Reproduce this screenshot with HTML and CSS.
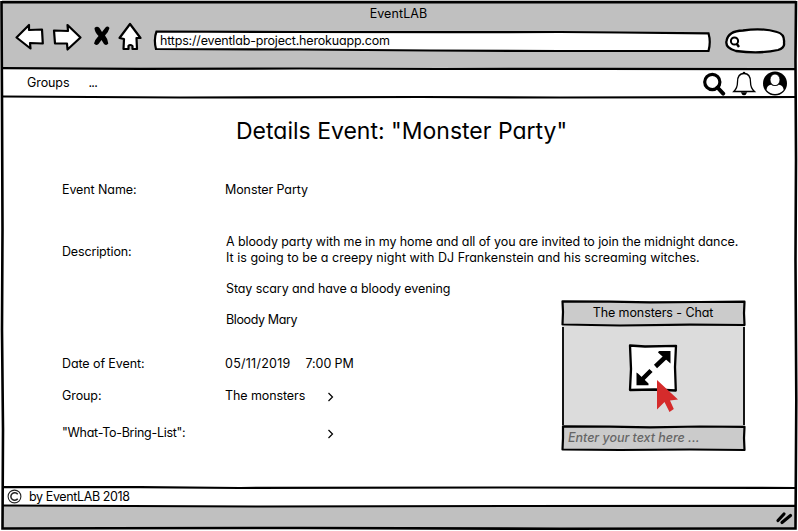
FILE: index.html
```html
<!DOCTYPE html>
<html lang="en">
<head>
<meta charset="utf-8">
<title>EventLAB</title>
<link rel="stylesheet" href="styles.css">
</head>
<body>
<div class="window">
  <header class="browser">
    <div class="browser-title"><span class="t-app">EventLAB</span></div>
    <div class="toolbar">
      <svg class="nav-icons" width="132" height="34" viewBox="12 20 132 34">
        <g fill="#fff" stroke="#000" stroke-width="2.2" stroke-linejoin="round">
          <path d="M16.500 37.500L29 25V30L42 29.500L42.800 43.500L30 43L30.500 48.500Z"/>
          <path d="M54 30.500L68 31L67.500 25L80.500 37.500L67.500 49.500L67 43.500L55 43.500Z"/>
          <path d="M130 24L140.500 38H136.500L137 49H132.500V46Q130 44 128.500 46V49H123.500L124 39L119.500 38Z"/>
        </g>
        <path d="M94.500 28Q97 25.500 99.500 28L102 32L105.500 27.500Q107.500 25.500 109.500 28Q108.500 32 105 35.500Q108 39 108.300 43.500Q106.500 46 104 44L101.500 40L98.500 44Q96 46 94 43.500Q95 39.500 98.500 36Q94.500 32 94.500 28Z"/>
      </svg>
      <div class="address">
        <svg class="sketch" width="560" height="22" viewBox="152 30 560 22"><path d="M156.500 31.500L300 32L450 32.200L560 32L620 32.500L708.500 33.300Q711 42 708.500 51L560 51L430 50.500L300 49.500L156 49Q153.500 39 156.500 31.500Z" fill="#fff" stroke="#000" stroke-width="2.200"/></svg>
        <span class="t-url">https://eventlab-project.herokuapp.com</span>
      </div>
      <svg class="search-box" width="62" height="28" viewBox="724 27 62 28">
        <path d="M736 51Q725 48 726.500 41Q728 31 743 30.500Q762 27.500 777 32Q785 34 784 43Q785 48 778 50Q760 54 736 51Z" fill="#fff" stroke="#000" stroke-width="2.300"/>
        <circle cx="734.500" cy="41" r="3.600" fill="none" stroke="#000" stroke-width="2"/><path d="M736.500 43.500L739 47" stroke="#000" stroke-width="2.400"/>
      </svg>
    </div>
  </header>
  <nav class="menu">
    <span class="t-groups">Groups</span><span class="dots">...</span>
    <svg class="menu-icons" width="86" height="26" viewBox="702 70 86 26">
      <circle cx="712.300" cy="82" r="7.600" fill="none" stroke="#000" stroke-width="3.200"/>
      <path d="M717.500 87.500L723.200 93.600" stroke="#000" stroke-width="4" stroke-linecap="round"/>
      <path d="M744 73.500C738.500 73.500 737.500 78 737.500 82C737.500 87 736.500 89 733.800 91.500H754.500C751.500 89 750.500 87 750.500 82C750.500 78 749.500 73.500 744 73.500Z" fill="#fff" stroke="#000" stroke-width="1.300"/>
      <path d="M743 73.500Q744 71.500 745 73.500" fill="none" stroke="#000" stroke-width="1.400"/>
      <path d="M740.800 92.200H747.200Q746 95.200 744 95.200Q742 95.200 740.800 92.200Z"/>
      <circle cx="775" cy="83.500" r="12"/>
      <path d="M766.500 90Q767 85 771 84.700Q775 87.500 779 84.700Q783 85 783.700 90Q780 94 775 94Q770 94 766.500 90Z" fill="#fff"/>
      <ellipse cx="775" cy="79.800" rx="5" ry="5.800" fill="#fff" stroke="#000" stroke-width=".8"/>
    </svg>
  </nav>
  <main class="page">
    <h1>Details Event: "Monster Party"</h1>
    <div class="body">
      <dl class="details">
        <dt>Event Name:</dt><dd class="v-name">Monster Party</dd>
        <dt class="l-desc">Description:</dt>
        <dd class="desc"><p>A bloody party with me in my home and all of you are invited to join the midnight dance.</p><p class="loose">It is going to be a creepy night with DJ Frankenstein and his screaming witches.</p><br><p>Stay scary and have a bloody evening</p><br><p class="signature">Bloody Mary</p></dd>
        <dt>Date of Event:</dt><dd class="row"><span class="v-date">05/11/2019</span><span class="v-time">7:00 PM</span></dd>
        <dt>Group:</dt><dd class="row"><span class="v-group">The monsters</span><svg class="chev" width="8" height="10" viewBox="0 0 8 10"><path d="M1.500 1L5.500 5L1.500 9"/></svg></dd>
        <dt class="l-list">"What-To-Bring-List":</dt><dd class="row"><span class="v-group"></span><svg class="chev" width="8" height="10" viewBox="0 0 8 10"><path d="M1.500 1L5.500 5L1.500 9"/></svg></dd>
      </dl>
      <section class="chat">
        <svg class="sketch" width="186" height="154" viewBox="560 299 186 154">
          <path d="M562 301H745V325H562Z" fill="#cbcbcb"/><path d="M562 326H745V426H562Z" fill="#dcdcdc"/><path d="M562 426H745V450H562Z" fill="#cbcbcb"/>
          <g fill="none" stroke="#000" stroke-width="2.200" stroke-linejoin="round"><path d="M562.500 301.300L610 301.600L650 302.300L700 302L744.500 301.700L744 313L744.500 325L690 324.700L620 325.500L562.500 324.500L563 312Z"/><path d="M563 327V425M744 327V425" stroke-width="1.800"/><path d="M563 426.300L610 426.600L650 427.300L700 426.500L744.500 426.800L744 438L744.500 450L690 449.500L620 450L562.500 449.500L563 438Z"/></g>
        </svg>
        <header class="chat-head"><span class="t-chat">The monsters - Chat</span></header>
        <div class="chat-body">
          <svg width="54" height="70" viewBox="627 343 54 70">
            <path d="M630 346.500L645 347.500L676 346.800L675 368L675.800 391.500L655 390.500L630 391L631 370Z" fill="#fff" stroke="#000" stroke-width="2.300" stroke-linejoin="round"/>
            <path d="M655.500 367.500L665.500 358M651 371.500L642.500 380" stroke="#000" stroke-width="4.500"/>
            <path d="M670.500 352V364.500L658 353.500L659 352ZM636.500 386.200V373.500L638 374.500L648.500 384.500V386.200Z"/>
            <path d="M657 381V410.500L664.500 403L669.500 413L673.800 410L670 401.500L678 400.500Z" fill="#d52b2b"/>
          </svg>
        </div>
        <footer class="chat-input"><span class="t-input">Enter your text here ...</span></footer>
      </section>
    </div>
  </main>
  <footer class="footer"><svg width="15" height="15" viewBox="0 0 15 15" fill="none" stroke="#222"><circle cx="7.500" cy="7.500" r="6.400" stroke-width="1.100"/><path d="M10.700 5.200A3.800 3.800 0 1 0 10.700 9.800" stroke-width="1.500"/></svg><span class="t-by">by EventLAB 2018</span></footer>
  <div class="status"><svg width="19" height="14" viewBox="774 511 19 14"><path d="M778 520.500L784 514M782 522.500L790.500 515.500" stroke="#000" stroke-width="3.200" stroke-linecap="round"/></svg></div>
  <svg class="frame" width="798" height="531" viewBox="0 0 798 531">
    <g fill="none" stroke="#000" stroke-width="2.200">
      <path d="M1.500 2.200H796L795.500 60L796 160L795.500 260L796.300 400L795.500 528.500L560 528.800L300 528L110 528.200L2.500 528.500L3 430L2 330L2.500 230L2 100Z" stroke-width="2.600"/>
      <path d="M2 68.200L140 68.800L300 68.500L440 69L600 68.800L796 69.200"/>
      <path d="M2 96.500L180 97.500L420 97L560 97.500L796 97"/>
      <path d="M2 487.200L140 487.200L240 488L500 487.500L796 488"/>
      <path d="M2 505.500L130 506L260 506.500L520 506L796 505.800"/>
    </g>
  </svg>
</div>
</body>
</html>
```

FILE: styles.css
```css
* { box-sizing: border-box; margin: 0; padding: 0; }
body { width: 798px; height: 531px; overflow: hidden; background: #fff; color: #000; font: 12.500px/16px Inter, "Open Sans", sans-serif; font-feature-settings: "cv11"; letter-spacing: -.09px; }
svg { display: block; flex: none; }
span, p, dt, dd, h1 { white-space: nowrap; }
.window { position: relative; display: flex; flex-direction: column; height: 531px; }
.frame { position: absolute; inset: 0; pointer-events: none; }
.browser { height: 69px; margin: 0 2px; padding-top: 6px; background: #c0c0c0; }
.browser-title { display: flex; justify-content: center; height: 14px; padding-right: 1px; letter-spacing: .1px; }
.toolbar { display: flex; align-items: flex-start; padding-left: 10px; }
.address { position: relative; display: flex; align-items: center; width: 560px; height: 22px; margin: 10px 12px 0 8px; padding-left: 8px; letter-spacing: -.18px; }
.address span { position: relative; }
.sketch { position: absolute; left: 0; top: 0; }
.search-box { margin-top: 7px; }
.menu { display: flex; align-items: center; height: 28px; padding: 0 10px 0 27px; }
.dots { margin-left: 19px; letter-spacing: -.7px; }
.menu-icons { margin-left: auto; }
.page { height: 390px; }
h1 { height: 66px; padding-top: 20px; padding-left: 236px; font-size: 23px; line-height: 28px; font-weight: 400; letter-spacing: 0; }
.body { display: flex; height: 324px; }
.details { display: grid; grid-template-columns: 163px 337px; grid-template-rows: 52px 122px 32px 37px 32px; width: 500px; margin-left: 62px; padding-top: 19px; }
.desc { padding: 0 0 0 1px; line-height: 15.600px; }
.loose { letter-spacing: .02px; }
.signature { letter-spacing: -.38px; }
.l-desc { padding-top: 10px; letter-spacing: -.15px; }
.l-list { letter-spacing: -.28px; }
.row { display: flex; }
.v-date { letter-spacing: .25px; }
.v-time { margin-left: 15px; }
.v-group { width: 102px; }
.chev { margin-top: 4px; fill: none; stroke: #000; stroke-width: 1.200; }
.chat { position: relative; width: 186px; height: 154px; margin: 136px 0 0 -2px; padding: 2px; }
.chat-head { position: relative; display: flex; justify-content: center; align-items: center; height: 24px; }
.chat-body { position: relative; height: 100px; padding: 17px 0 0 65px; }
.chat-input { position: relative; display: flex; align-items: center; height: 24px; padding: 1px 0 0 6px; color: #666; font-weight: 500; font-style: italic; letter-spacing: -.03px; }
.footer { display: flex; align-items: center; gap: 7px; height: 19px; padding-left: 7px; letter-spacing: -.38px; }
.status { display: flex; align-items: center; justify-content: flex-end; height: 23px; margin: 0 2px; padding-right: 3px; background: #c0c0c0; }
```
